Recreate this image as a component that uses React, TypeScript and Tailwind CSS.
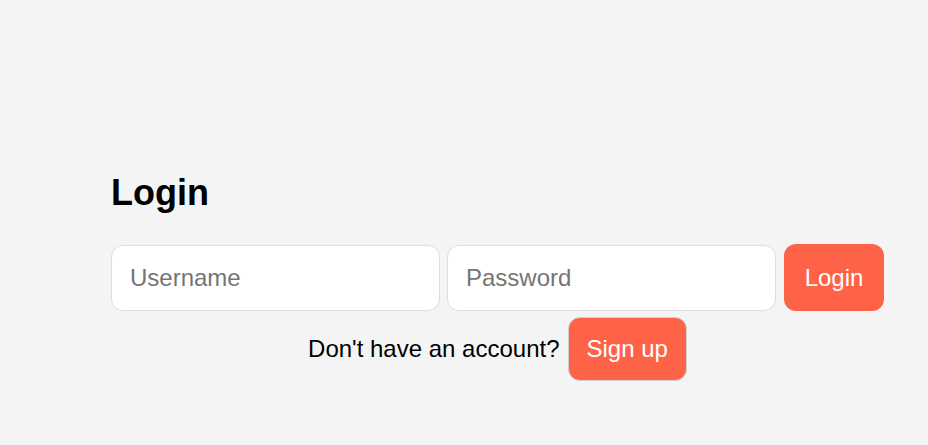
const App = () => {
  return (
    <div className="h-[445px] w-full bg-[#f4f4f4] font-['Liberation_Sans',Arial,sans-serif] text-[24px] text-black">
      <div className="ml-[111px] w-[773px] pt-[172px]">
        <h2 className="text-[36px] font-bold leading-[41px]">Login</h2>
        <div className="mt-[31px] flex items-center gap-[7px]">
          <input
            type="text"
            placeholder="Username"
            className="h-[66px] min-w-0 flex-1 rounded-[12px] border border-[#dddddd] bg-white px-[18px] text-[24px] placeholder:text-[#757575] outline-none"
          />
          <input
            type="password"
            placeholder="Password"
            className="h-[66px] min-w-0 flex-1 rounded-[12px] border border-[#dddddd] bg-white px-[18px] text-[24px] placeholder:text-[#757575] outline-none"
          />
          <button className="ml-[1px] h-[67px] w-[100px] rounded-[12px] bg-[#ff6347] text-[24px] text-white">
            Login
          </button>
        </div>
        <div className="mt-[6px] flex items-center justify-center gap-[8px]">
          <span>Don't have an account?</span>
          <button className="h-[64px] rounded-[12px] border border-[#d0d0d0] bg-[#ff6347] px-[18px] text-[24px] text-white">
            Sign up
          </button>
        </div>
      </div>
    </div>
  );
};

export default App;
